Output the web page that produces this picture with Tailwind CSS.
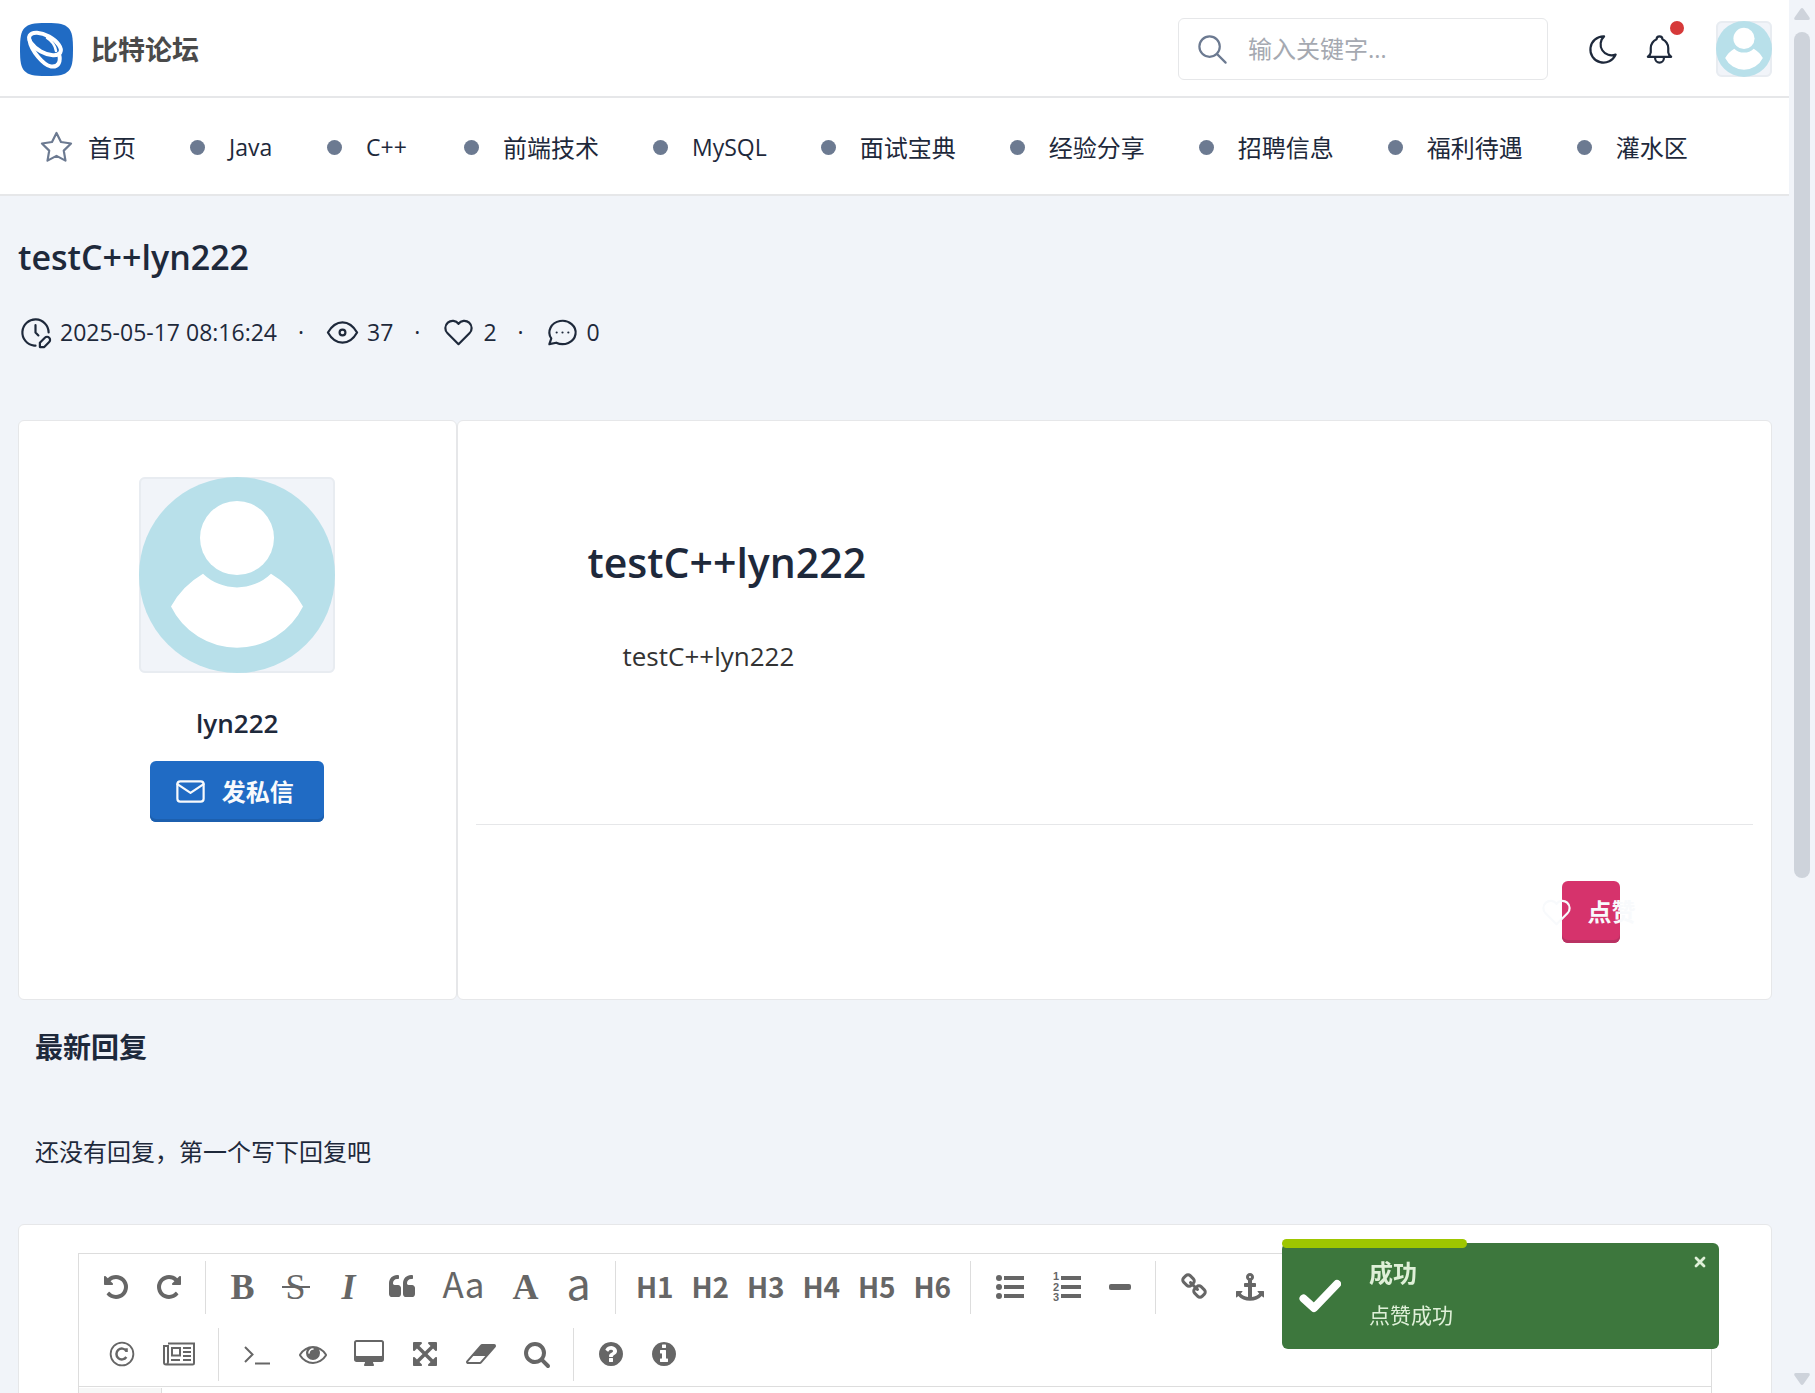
<!DOCTYPE html>
<html lang="zh-CN">
<head>
<meta charset="utf-8">
<meta name="viewport" content="width=device-width, initial-scale=1">
<title>比特论坛 - 帖子详情</title>
<script src="https://cdn.jsdelivr.net/npm/@tailwindcss/browser@4"></script>
</head>
<body class="flex h-screen overflow-hidden bg-[#f1f4f9] font-['Open_Sans','Noto_Sans_CJK_SC',sans-serif] text-[23px] text-[#1e293b]">

<svg class="hidden" aria-hidden="true">
  <symbol id="avatar" viewBox="0 0 196 196">
    <circle cx="98" cy="98" r="98" fill="#b8e0ea"/>
    <circle cx="98" cy="61" r="37" fill="#fff"/>
    <path fill="#fff" d="M64 96.700A49 49 0 0 0 132 96.700Q153 109 164 129.500A73.500 73.500 0 0 1 32 129.500Q43 109 64 96.700Z"/>
  </symbol>
  <symbol id="heart" viewBox="0 0 24 24">
    <path fill="none" stroke="currentColor" stroke-width="1.500" stroke-linecap="round" stroke-linejoin="round" d="M19.500 12.572l-7.500 7.428l-7.500-7.428m0 0a5 5 0 1 1 7.500-6.566a5 5 0 1 1 7.500 6.572"/>
  </symbol>
</svg>

<div class="h-screen min-w-0 flex-1 overflow-hidden">
  <header class="flex h-[98px] items-center border-b-2 border-[#e6e7e9] bg-white pt-[2px] pr-[17px] pl-5">
    <a href="#" class="flex items-center gap-[18px]">
      <svg class="size-[53px]" viewBox="0 0 53 53" fill="none" stroke="#fff">
        <path fill="#206bc4" stroke="none" d="M26.500 0C40 0 44.500 1 48.500 5C52 9 53 14 53 26.500S52 44 48.500 48C44.500 52 40 53 26.500 53S8.500 52 4.500 48C1 44 0 39 0 26.500S1 9 4.500 5C8.500 1 13 0 26.500 0Z"/>
        <ellipse cx="25" cy="21" rx="17.500" ry="8.500" transform="rotate(29 25 21)" stroke-width="4"/>
        <path stroke-width="4" stroke-linecap="round" d="M9.500 17C11 28 24 42.500 31 43.500C39 44.500 41 38 39 31"/>
        <path stroke-width="2.500" stroke-linecap="round" d="M27 15C32 18 35 22 36 28"/>
      </svg>
      <span class="font-['Noto_Sans_CJK_SC',sans-serif] text-[27px] leading-9 font-bold text-[#4a4a4a]">比特论坛</span>
    </a>
    <label class="ml-auto flex h-[62px] w-[370px] items-center gap-[18px] rounded-md border border-[#e6e7e9] bg-white pl-4">
      <svg class="size-[35px] shrink-0 text-[#6c7a91]" viewBox="0 0 24 24" fill="none" stroke="currentColor" stroke-width="1.500" stroke-linecap="round" stroke-linejoin="round"><circle cx="10" cy="10" r="7"/><path d="M21 21l-6-6"/></svg>
      <input type="search" aria-label="搜索" placeholder="输入关键字…" class="min-w-0 flex-1 bg-transparent text-2xl outline-none placeholder:text-[#a5a9b1]">
    </label>
    <button class="ml-[38px]" aria-label="深色模式"><svg class="block size-[35px]" viewBox="0 0 24 24" fill="none" stroke="currentColor" stroke-width="1.500" stroke-linecap="round" stroke-linejoin="round"><path d="M12 3c.132 0 .263 0 .393 0a7.500 7.500 0 0 0 7.920 12.446a9 9 0 1 1-8.313-12.454z"/></svg></button>
    <button class="relative ml-[21px]" aria-label="通知">
      <svg class="block size-[35px]" viewBox="0 0 24 24" fill="none" stroke="currentColor" stroke-width="1.500" stroke-linecap="round" stroke-linejoin="round"><path d="M10 5a2 2 0 0 1 4 0a7 7 0 0 1 4 6v3a4 4 0 0 0 2 3h-16a4 4 0 0 0 2-3v-3a7 7 0 0 1 4-6M9 17v1a3 3 0 0 0 6 0v-1"/></svg>
      <span class="absolute -top-[11px] -right-[7px] size-[14px] rounded-full bg-[#d63939]"></span>
    </button>
    <a href="#" aria-label="个人中心" class="ml-[39px] size-14 overflow-hidden rounded-md bg-[#f1f4f9] outline-2 -outline-offset-2 outline-[#e8ecf1]"><svg class="relative size-14"><use href="#avatar"/></svg></a>
  </header>

  <nav class="flex h-[98px] items-center gap-[54px] border-b-2 border-[#e6e7e9] bg-white pt-[3px] pl-[39px] text-2xl whitespace-nowrap">
    <a href="#" class="flex items-center gap-[14px]"><svg class="size-[35px] text-[#6c7a91]" viewBox="0 0 24 24" fill="none" stroke="currentColor" stroke-width="1.500" stroke-linecap="round" stroke-linejoin="round"><path d="M12 17.750l-6.172 3.245l1.179-6.873l-5-4.867l6.900-1l3.086-6.253l3.086 6.253l6.900 1l-5 4.867l1.179 6.873z"/></svg>首页</a>
    <a href="#" class="flex items-center gap-6"><i class="size-[15px] rounded-full bg-[#6c7a91]"></i><span class="min-w-11 text-[23px]">Java</span></a>
    <a href="#" class="flex items-center gap-6"><i class="size-[15px] rounded-full bg-[#6c7a91]"></i><span class="min-w-11 text-[23px]">C++</span></a>
    <a href="#" class="flex items-center gap-6"><i class="size-[15px] rounded-full bg-[#6c7a91]"></i>前端技术</a>
    <a href="#" class="flex items-center gap-6"><i class="size-[15px] rounded-full bg-[#6c7a91]"></i><span class="text-[23px]">MySQL</span></a>
    <a href="#" class="flex items-center gap-6"><i class="size-[15px] rounded-full bg-[#6c7a91]"></i>面试宝典</a>
    <a href="#" class="flex items-center gap-6"><i class="size-[15px] rounded-full bg-[#6c7a91]"></i>经验分享</a>
    <a href="#" class="flex items-center gap-6"><i class="size-[15px] rounded-full bg-[#6c7a91]"></i>招聘信息</a>
    <a href="#" class="flex items-center gap-6"><i class="size-[15px] rounded-full bg-[#6c7a91]"></i>福利待遇</a>
    <a href="#" class="flex items-center gap-6"><i class="size-[15px] rounded-full bg-[#6c7a91]"></i>灌水区</a>
  </nav>

  <main class="pt-10 pr-[17px] pl-[18px]">
    <h1 class="text-[34px] leading-[42px] font-semibold">testC++lyn222</h1>
    <div class="mt-9 flex h-9 items-center leading-9">
      <svg class="mr-[7px] size-[35px]" viewBox="0 0 24 24" fill="none" stroke="currentColor" stroke-width="1.500" stroke-linecap="round" stroke-linejoin="round"><path d="M21 12a9 9 0 1 0-9.972 8.948c.32.034.644.052.972.052M12 7v5l2 2M18.420 15.610a2.100 2.100 0 0 1 2.970 2.970l-3.390 3.420h-3v-3l3.420-3.390z"/></svg>
      <span>2025-05-17 08:16:24</span>
      <span class="mx-[21px]">·</span>
      <svg class="mr-[7px] size-[35px]" viewBox="0 0 24 24" fill="none" stroke="currentColor" stroke-width="1.500" stroke-linecap="round" stroke-linejoin="round"><circle cx="12" cy="12" r="2"/><path d="M22 12c-2.667 4.667-6 7-10 7s-7.333-2.333-10-7c2.667-4.667 6-7 10-7s7.333 2.333 10 7"/></svg>
      <span>37</span>
      <span class="mx-[21px]">·</span>
      <svg class="mr-[7px] size-[35px]"><use href="#heart"/></svg>
      <span>2</span>
      <span class="mx-[21px]">·</span>
      <svg class="mr-[7px] size-[35px]" viewBox="0 0 24 24" fill="none" stroke="currentColor" stroke-width="1.500" stroke-linecap="round" stroke-linejoin="round"><path d="M3 20l1.300-3.900a9 8 0 1 1 3.400 2.900l-4.700 1M12 12v.01M8 12v.01M16 12v.01"/></svg>
      <span>0</span>
    </div>

    <div class="mt-[70px] grid grid-cols-4">
      <aside class="flex flex-col items-center rounded-md border border-[#e6e7e9] bg-white pt-14">
        <div class="size-[196px] overflow-hidden rounded-md bg-[#f1f4f9] outline-2 -outline-offset-2 outline-[#e8ecf1]"><svg class="relative size-[196px]"><use href="#avatar"/></svg></div>
        <p class="mt-7 text-[26px] leading-[44px] font-semibold">lyn222</p>
        <button class="mt-4 flex h-[61px] w-[174px] items-center justify-center gap-[14px] rounded-md bg-[#206bc4] pr-2 text-2xl font-bold text-[#f8fafc] shadow-[inset_0_-3px_0_#1c5fae]">
          <svg class="size-[35px]" viewBox="0 0 24 24" fill="none" stroke="currentColor" stroke-width="1.500" stroke-linecap="round" stroke-linejoin="round"><rect x="3" y="5" width="18" height="14" rx="2"/><path d="M3 7l9 6l9-6"/></svg>发私信
        </button>
      </aside>
      <article class="col-span-3 rounded-md border border-[#e6e7e9] bg-white px-[18px]">
        <div class="h-[403px] px-28 pt-[115px]">
          <h2 class="text-[41px] leading-[52px] font-semibold">testC++lyn222</h2>
          <p class="mt-12 pl-[35px] text-[26px] leading-10 text-[#333]">testC++lyn222</p>
        </div>
        <div class="flex justify-end border-t border-[#e6e7e9] pt-14 pr-[133px] pb-14">
          <button class="flex h-[62px] w-[58px] items-center justify-center gap-[14px] rounded-md bg-[#d6336c] pr-2 text-2xl font-bold whitespace-nowrap text-[#f8fafc] shadow-[inset_0_-3px_0_#b93263]">
            <svg class="size-[35px] shrink-0"><use href="#heart"/></svg><span class="shrink-0">点赞</span>
          </button>
        </div>
      </article>
    </div>

    <h3 class="mt-[27px] pl-[17px] text-[28px] leading-10 font-bold">最新回复</h3>
    <p class="mt-[67px] pl-[17px] text-2xl leading-9">还没有回复，第一个写下回复吧</p>

    <section class="mt-[54px] rounded-md border border-[#e6e7e9] bg-white px-[59px] pt-7">
      <div class="border border-[#ddd] text-[#666]">
        <div class="flex flex-col gap-[14px] border-b border-[#ddd] pt-[7px] pb-[5px]">
          <div class="flex h-[53px] items-center">
            <div class="flex h-full items-center border-r border-[#ddd] px-[10px] pb-[2px]">
              <button class="grid w-[53px] place-items-center" aria-label="撤销"><svg class="size-7" viewBox="0 0 1792 1792" fill="currentColor"><path d="M1664 896q0 156-61 298t-164 245-245 164-298 61q-172 0-327-72.500t-264-204.500q-7-10-6.500-22.500t8.500-20.500l137-138q10-9 25-9 16 2 23 12 73 95 179 147t225 52q104 0 198.500-40.500t163.500-109.500 109.500-163.500 40.500-198.500-40.500-198.500-109.500-163.500-163.500-109.500-198.500-40.500q-98 0-188 35.500t-160 101.500l137 138q31 30 14 69-17 40-59 40h-448q-26 0-45-19t-19-45v-448q0-42 40-59 39-17 69 14l130 129q107-101 244.500-156.500t284.500-55.500q156 0 298 61t245 164 164 245 61 298z"/></svg></button>
              <button class="grid w-[53px] place-items-center" aria-label="重做"><svg class="size-7" viewBox="0 0 1792 1792" fill="currentColor"><path transform="matrix(-1 0 0 1 1792 0)" d="M1664 896q0 156-61 298t-164 245-245 164-298 61q-172 0-327-72.500t-264-204.500q-7-10-6.500-22.500t8.500-20.500l137-138q10-9 25-9 16 2 23 12 73 95 179 147t225 52q104 0 198.500-40.500t163.500-109.500 109.500-163.500 40.500-198.500-40.500-198.500-109.500-163.500-163.500-109.500-198.500-40.500q-98 0-188 35.500t-160 101.500l137 138q31 30 14 69-17 40-59 40h-448q-26 0-45-19t-19-45v-448q0-42 40-59 39-17 69 14l130 129q107-101 244.500-156.500t284.500-55.500q156 0 298 61t245 164 164 245 61 298z"/></svg></button>
            </div>
            <div class="flex h-full items-center border-r border-[#ddd] px-[10px] pb-[2px] leading-9">
              <button class="w-[53px] font-['Liberation_Serif',serif] text-[36px] font-bold">B</button>
              <button class="grid w-[53px] place-items-center font-['Liberation_Serif',serif] text-[36px]" aria-label="删除线"><span class="col-start-1 row-start-1">S</span><i class="col-start-1 row-start-1 h-[2px] w-7 bg-[#666]"></i></button>
              <button class="w-[53px] font-['Liberation_Serif',serif] text-[36px] font-bold italic">I</button>
              <button class="grid w-[53px] place-items-center" aria-label="引用"><svg class="size-7" viewBox="0 0 1792 1792" fill="currentColor"><path d="M832 960v384q0 80-56 136t-136 56h-384q-80 0-136-56t-56-136v-704q0-104 40.500-198.500t109.500-163.500 163.500-109.500 198.500-40.500h64q26 0 45 19t19 45v128q0 26-19 45t-45 19h-64q-106 0-181 75t-75 181v32q0 40 28 68t68 28h224q80 0 136 56t56 136zm896 0v384q0 80-56 136t-136 56h-384q-80 0-136-56t-56-136v-704q0-104 40.500-198.500t109.500-163.500 163.500-109.500 198.500-40.500h64q26 0 45 19t19 45v128q0 26-19 45t-45 19h-64q-106 0-181 75t-75 181v32q0 40 28 68t68 28h224q80 0 136 56t56 136z"/></svg></button>
              <button class="w-[71px] pb-2 font-['Noto_Sans_CJK_SC',sans-serif] text-[35px]">Aa</button>
              <button class="w-[53px] font-['Liberation_Serif',serif] text-[36px] font-bold">A</button>
              <button class="w-[53px] pb-3 font-['Noto_Sans_CJK_SC',sans-serif] text-[43px]">a</button>
            </div>
            <div class="flex h-full w-[355px] items-center border-r border-[#ddd] pr-[10px] pb-1 pl-[11px] font-['Noto_Sans_CJK_SC',sans-serif] text-[28px] leading-9 font-bold">
              <button class="flex-1">H1</button><button class="flex-1">H2</button><button class="flex-1">H3</button><button class="flex-1">H4</button><button class="flex-1">H5</button><button class="flex-1">H6</button>
            </div>
            <div class="flex h-full items-center border-r border-[#ddd] pr-[11px] pb-[2px] pl-[10px]">
              <button class="grid w-[57px] place-items-center" aria-label="无序列表"><svg class="size-7" viewBox="0 0 28 28" fill="currentColor"><circle cx="3" cy="5" r="3"/><circle cx="3" cy="14" r="3"/><circle cx="3" cy="23" r="3"/><path d="M8 3h20v4H8zM8 12h20v4H8zM8 21h20v4H8z"/></svg></button>
              <button class="grid w-[57px] place-items-center" aria-label="有序列表"><svg class="size-7 overflow-visible" viewBox="0 0 28 28" fill="currentColor"><path d="M8 3h20v4H8zM8 12h20v4H8zM8 21h20v4H8z"/><g font-size="11" font-weight="700" font-family="Liberation Sans, sans-serif"><text x="0" y="7">1</text><text x="0" y="18">2</text><text x="0" y="28">3</text></g></svg></button>
              <button class="grid w-[49px] place-items-center" aria-label="分隔线"><i class="h-[6px] w-[22px] rounded-xs bg-[#666]"></i></button>
            </div>
            <div class="flex h-full items-center px-[10px] pb-[2px]">
              <button class="grid w-14 place-items-center" aria-label="链接"><svg class="size-7" viewBox="0 0 1792 1792" fill="currentColor"><path d="M1520 1216q0-40-28-68l-208-208q-28-28-68-28-42 0-72 32 3 3 19 18.500t21.500 21.500 15 19 13 25.500 3.500 27.500q0 40-28 68t-68 28q-15 0-27.500-3.500t-25.500-13-19-15-21.500-21.500-18.500-19q-33 31-33 73 0 40 28 68l206 207q27 27 68 27 40 0 68-26l147-146q28-28 28-67zm-703-705q0-40-28-68l-206-207q-28-28-68-28-39 0-68 27l-147 146q-28 28-28 67 0 40 28 68l208 208q27 27 68 27 42 0 72-31-3-3-19-18.500t-21.500-21.500-15-19-13-25.500-3.500-27.500q0-40 28-68t68-28q15 0 27.500 3.500t25.500 13 19 15 21.500 21.500 18.500 19q33-31 33-73zm895 705q0 120-85 203l-147 146q-83 83-203 83-121 0-204-85l-206-207q-83-83-83-203 0-123 88-209l-88-88q-86 88-208 88-120 0-204-84l-208-208q-84-84-84-204t85-203l147-146q83-83 203-83 121 0 204 85l206 207q83 83 83 203 0 123-88 209l88 88q86-88 208-88 120 0 204 84l208 208q84 84 84 204z"/></svg></button>
              <button class="grid w-14 place-items-center" aria-label="锚点"><svg class="size-7" viewBox="0 0 1792 1792" fill="currentColor"><path d="M960 256q0-26-19-45t-45-19-45 19-19 45 19 45 45 19 45-19 19-45zm832 928v352q0 22-20 30-8 2-12 2-13 0-23-9l-93-93q-119 143-318.500 226.500t-429.500 83.500-429.500-83.500-318.500-226.500l-93 93q-9 9-23 9-4 0-12-2-20-8-20-30v-352q0-14 9-23t23-9h352q22 0 30 20 8 19-7 35l-100 100q67 91 189.500 153.500t271.500 82.500v-647h-192q-26 0-45-19t-19-45v-128q0-26 19-45t45-19h192v-163q-58-34-93-92.500t-35-128.500q0-106 75-181t181-75 181 75 75 181q0 70-35 128.500t-93 92.500v163h192q26 0 45 19t19 45v128q0 26-19 45t-45 19h-192v647q149-20 271.500-82.500t189.500-153.500l-100-100q-15-16-7-35 8-20 30-20h352q14 0 23 9t9 23z"/></svg></button>
            </div>
          </div>
          <div class="flex h-[53px] items-center">
            <div class="flex h-full items-center border-r border-[#ddd] pr-[11px] pb-[2px] pl-[14px]">
              <button class="grid w-[57px] place-items-center" aria-label="特殊符号"><svg class="size-[26px]" viewBox="0 0 24 24" fill="none" stroke="currentColor"><circle cx="12" cy="12" r="10.500" stroke-width="1.700"/><path stroke-width="2.300" d="M16 9.200A5 5 0 1 0 16 14.800M16.200 6.800v3.400"/></svg></button>
              <button class="grid w-[57px] place-items-center" aria-label="插入引用块"><svg class="h-6 w-8" viewBox="0 0 32 24" fill="none" stroke="currentColor" stroke-width="2"><path d="M5 1.500h26v19.500q0 1.500-1.500 1.500H3q-2 0-2-2V4h4v16q0 2-1.500 2.500"/><path d="M9 6h8v7.500H9zM20 6h8M20 10h8M20 14h8M8 18h9M20 18h8"/></svg></button>
            </div>
            <div class="flex h-full items-center border-r border-[#ddd] pr-2 pb-[2px] pl-[10px]">
              <button class="grid w-14 place-items-center" aria-label="代码"><svg class="h-7 w-[26px]" viewBox="0 0 26 28" fill="none" stroke="currentColor" stroke-width="2"><path d="M1 7l7.500 7.500L1 22M11 23.500h15"/></svg></button>
              <button class="grid w-14 place-items-center" aria-label="实时预览"><svg class="size-7" viewBox="0 0 1792 1792" fill="currentColor"><path d="M1664 960q-152-236-381-353 61 104 61 225 0 185-131.500 316.500t-316.500 131.500-316.500-131.500-131.500-316.500q0-121 61-225-229 117-381 353 133 205 333.500 326.500t434.500 121.500 434.500-121.500 333.500-326.500zm-720-384q0-20-14-34t-34-14q-125 0-214.500 89.500t-89.500 214.500q0 20 14 34t34 14 34-14 14-34q0-86 61-147t147-61q20 0 34-14t14-34zm848 384q0 34-20 69-140 230-376.500 368.500t-499.500 138.500-499.500-139-376.500-368q-20-35-20-69t20-69q140-229 376.500-368t499.500-139 499.500 139 376.500 368q20 35 20 69z"/></svg></button>
              <button class="grid w-14 place-items-center" aria-label="全窗口预览"><svg class="h-7 w-[30px]" viewBox="-64 0 1920 1792" fill="currentColor"><path d="M1728 992v-832q0-13-9.500-22.500t-22.500-9.500h-1600q-13 0-22.500 9.500t-9.500 22.500v832q0 13 9.500 22.500t22.500 9.500h1600q13 0 22.500-9.500t9.500-22.500zm128-832v1088q0 66-47 113t-113 47h-544q0 37 16 77.500t32 71 16 43.500q0 26-19 45t-45 19h-512q-26 0-45-19t-19-45q0-14 16-44t32-70 16-78h-544q-66 0-113-47t-47-113v-1088q0-66 47-113t113-47h1600q66 0 113 47t47 113z"/></svg></button>
              <button class="grid w-14 place-items-center" aria-label="全屏"><svg class="size-7" viewBox="0 0 1792 1792" fill="currentColor"><path d="M1411 541l-355 355 355 355 144-144q29-31 70-14 39 17 39 59v448q0 26-19 45t-45 19h-448q-42 0-59-40-17-39 14-69l144-144-355-355-355 355 144 144q31 30 14 69-17 40-59 40h-448q-26 0-45-19t-19-45v-448q0-42 40-59 39-17 69 14l144 144 355-355-355-355-144 144q-19 19-45 19-12 0-24-5-40-17-40-59v-448q0-26 19-45t45-19h448q42 0 59 40 17 39-14 69l-144 144 355 355 355-355-144-144q-31-30-14-69 17-40 59-40h448q26 0 45 19t19 45v448q0 42-39 59-13 5-25 5-26 0-45-19z"/></svg></button>
              <button class="grid w-14 place-items-center" aria-label="清空"><svg class="h-7 w-[30px]" viewBox="64 0 1920 1792" fill="currentColor"><path d="M960 1408l336-384h-768l-336 384h768zm1013-1077q15 34 9.500 71.500t-30.500 65.500l-896 1024q-38 44-96 44h-768q-38 0-69.500-20.500t-47.500-54.500q-15-34-9.500-71.500t30.500-65.500l896-1024q38-44 96-44h768q38 0 69.500 20.500t47.500 54.500z"/></svg></button>
              <button class="grid w-14 place-items-center" aria-label="搜索"><svg class="size-7" viewBox="0 0 1792 1792" fill="currentColor"><path d="M1216 832q0-185-131.500-316.500t-316.500-131.500-316.500 131.500-131.500 316.500 131.500 316.500 316.500 131.500 316.500-131.500 131.500-316.500zm512 832q0 52-38 90t-90 38q-54 0-90-38l-343-342q-179 124-399 124-143 0-273.500-55.500t-225-150-150-225-55.500-273.500 55.500-273.500 150-225 225-150 273.500-55.500 273.500 55.500 225 150 150 225 55.500 273.500q0 220-124 399l343 343q37 37 37 90z"/></svg></button>
            </div>
            <div class="flex h-full items-center pb-[2px] pl-[10px]">
              <button class="grid w-[53px] place-items-center" aria-label="帮助"><svg class="size-7" viewBox="0 0 1792 1792" fill="currentColor"><path d="M1024 1376v-192q0-14-9-23t-23-9h-192q-14 0-23 9t-9 23v192q0 14 9 23t23 9h192q14 0 23-9t9-23zm256-672q0-88-55.500-163t-138.500-116-170-41q-243 0-371 213-15 24 8 42l132 100q7 6 19 6 16 0 25-12 53-68 86-92 34-24 86-24 48 0 85.500 26t37.500 59q0 38-20 61t-68 45q-63 28-115.500 86.500t-52.500 125.500v36q0 14 9 23t23 9h192q14 0 23-9t9-23q0-19 21.500-49.500t54.500-49.500q32-18 49-28.500t46-35 44.500-48 28-60.500 12.500-81zm384 192q0 209-103 385.500t-279.500 279.500-385.500 103-385.500-103-279.500-279.500-103-385.500 103-385.500 279.500-279.500 385.500-103 385.500 103 279.500 279.500 103 385.500z"/></svg></button>
              <button class="grid w-[53px] place-items-center" aria-label="关于"><svg class="size-7" viewBox="0 0 1792 1792" fill="currentColor"><path d="M1152 1376v-160q0-14-9-23t-23-9h-96v-512q0-14-9-23t-23-9h-320q-14 0-23 9t-9 23v160q0 14 9 23t23 9h96v320h-96q-14 0-23 9t-9 23v160q0 14 9 23t23 9h448q14 0 23-9t9-23zm-128-896v-160q0-14-9-23t-23-9h-192q-14 0-23 9t-9 23v160q0 14 9 23t23 9h192q14 0 23-9t9-23zm640 416q0 209-103 385.500t-279.500 279.500-385.500 103-385.500-103-279.500-279.500-103-385.500 103-385.500 279.500-279.500 385.500-103 385.500 103 279.500 279.500 103 385.500z"/></svg></button>
            </div>
          </div>
        </div>
        <div class="flex h-96 pt-px">
          <div class="w-[83px] border-r border-[#ddd] bg-[#f7f7f7]"></div>
          <textarea aria-label="回复内容" class="flex-1 resize-none bg-white outline-none"></textarea>
        </div>
      </div>
    </section>
  </main>
</div>

<!-- page scrollbar -->
<div class="flex h-screen w-[26px] flex-col items-center pt-2 pr-[1px] pb-2" aria-hidden="true">
  <svg class="h-3 w-4" viewBox="0 0 16 12" fill="#ced3db"><path d="M6.500 1Q8-1 9.500 1L15.500 9.500Q16.500 12 14 12H2Q-.5 12 .5 9.500Z"/></svg>
  <div class="my-3 flex-1"><div class="h-7/11 w-4 rounded-full bg-[#ced3db]"></div></div>
  <svg class="h-3 w-4 rotate-180" viewBox="0 0 16 12" fill="#ced3db"><path d="M6.500 1Q8-1 9.500 1L15.500 9.500Q16.500 12 14 12H2Q-.5 12 .5 9.500Z"/></svg>
</div>

<!-- success toast -->
<div role="status" class="fixed right-24 bottom-11 flex h-[106px] w-[437px] items-start rounded-md bg-[#3d773d] pl-[17px] text-[#dff0d8]">
  <div class="absolute -top-1 left-0 h-[9px] w-[185px] rounded-full bg-[#9ec600]"></div>
  <svg class="mt-9 h-[34px] w-[42px]" viewBox="0 0 42 34" fill="none" stroke="#fff" stroke-width="8" stroke-linecap="round" stroke-linejoin="round"><path d="M4.500 19.500L15 29L38 5"/></svg>
  <div class="ml-7 flex-1 pt-[14px]">
    <p class="text-2xl leading-8 font-bold">成功</p>
    <p class="mt-[10px] text-[21px] leading-8">点赞成功</p>
  </div>
  <button class="mt-[13px] mr-[13px] grid size-3 place-items-center" aria-label="关闭"><svg class="size-3" viewBox="0 0 12 12" stroke="currentColor" stroke-width="2.800" stroke-linecap="round"><path d="M2 2l8 8M10 2l-8 8"/></svg></button>
</div>
</body>
</html>
